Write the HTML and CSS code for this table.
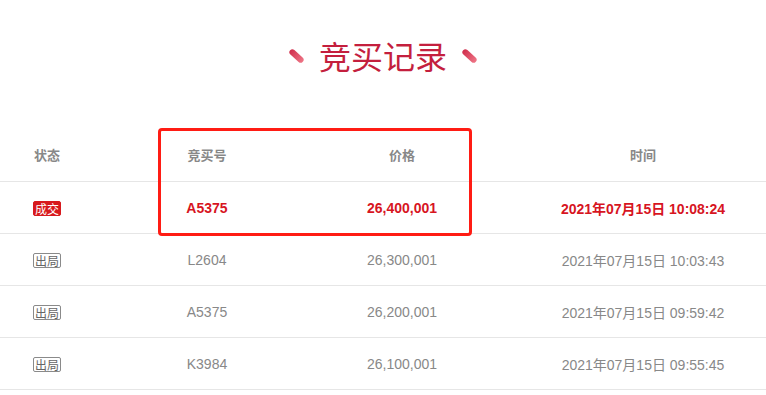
FILE: index.html
```html
<!DOCTYPE html>
<html lang="zh">
<head>
<meta charset="utf-8">
<link rel="stylesheet" href="styles.css">
</head>
<body>
<div class="page">
  <h1 class="title"><span class="dash"></span><span class="title-text">竞买记录</span><span class="dash"></span></h1>
  <div class="table">
    <div class="row head">
      <div class="c c1">状态</div>
      <div class="c c2">竞买号</div>
      <div class="c c3">价格</div>
      <div class="c c4">时间</div>
    </div>
    <div class="row win">
      <div class="c c1"><span class="badge deal">成交</span></div>
      <div class="c c2">A5375</div>
      <div class="c c3">26,400,001</div>
      <div class="c c4">2021年07月15日 10:08:24</div>
    </div>
    <div class="row">
      <div class="c c1"><span class="badge out">出局</span></div>
      <div class="c c2">L2604</div>
      <div class="c c3">26,300,001</div>
      <div class="c c4">2021年07月15日 10:03:43</div>
    </div>
    <div class="row">
      <div class="c c1"><span class="badge out">出局</span></div>
      <div class="c c2">A5375</div>
      <div class="c c3">26,200,001</div>
      <div class="c c4">2021年07月15日 09:59:42</div>
    </div>
    <div class="row">
      <div class="c c1"><span class="badge out">出局</span></div>
      <div class="c c2">K3984</div>
      <div class="c c3">26,100,001</div>
      <div class="c c4">2021年07月15日 09:55:45</div>
    </div>
    <div class="highlight"></div>
  </div>
</div>
</body>
</html>
```
FILE: styles.css
```css
html, body {
  margin: 0;
  padding: 0;
  background: #fff;
}
body {
  font-family: "Liberation Sans", Arial, "Noto Sans CJK SC", sans-serif;
  color: #888;
  width: 766px;
  height: 395px;
  overflow: hidden;
}
.page {
  display: flex;
  flex-direction: column;
}
.title {
  margin: 35px 0 0;
  height: 40px;
  display: flex;
  align-items: center;
  justify-content: center;
  gap: 14px;
  font-weight: normal;
  font-size: 32px;
  line-height: 40px;
  color: #c41f3e;
  font-family: "Noto Sans CJK SC", sans-serif;
}
.dash {
  width: 17px;
  height: 6px;
  border-radius: 3px;
  background: linear-gradient(90deg, #d02e4c, #ee7586);
  transform: rotate(42deg);
  margin-top: 2px;
}
.table {
  position: relative;
  margin-top: 55px;
}
.row {
  display: grid;
  grid-template-columns: 94px 226px 164px 1fr;
  height: 51px;
  border-bottom: 1px solid #e6e6e6;
  align-items: center;
  font-size: 14px;
}
.row.head {
  height: 51px;
  font-size: 13px;
  font-weight: bold;
  color: #888;
}
.row.head .c {
  padding-bottom: 2px;
}
.c {
  text-align: center;
  white-space: nowrap;
}
.c4 {
  padding-left: 36px;
}
.row.win {
  color: #d7151f;
  font-weight: bold;
}
.badge {
  display: inline-block;
  font-size: 12px;
  line-height: 13px;
  padding: 0 1px;
  border-radius: 2px;
  font-weight: normal;
  font-family: "Noto Sans CJK SC", sans-serif;
  vertical-align: middle;
}
.badge.deal {
  background: #d71a1e;
  color: #fff;
  border: 1px solid #d71a1e;
}
.badge.out {
  color: #666;
  border: 1px solid #8a8a8a;
}
.highlight {
  position: absolute;
  left: 158px;
  top: -2px;
  width: 308px;
  height: 102px;
  border: 3px solid #ff1c14;
  border-radius: 4px;
  pointer-events: none;
}
```
